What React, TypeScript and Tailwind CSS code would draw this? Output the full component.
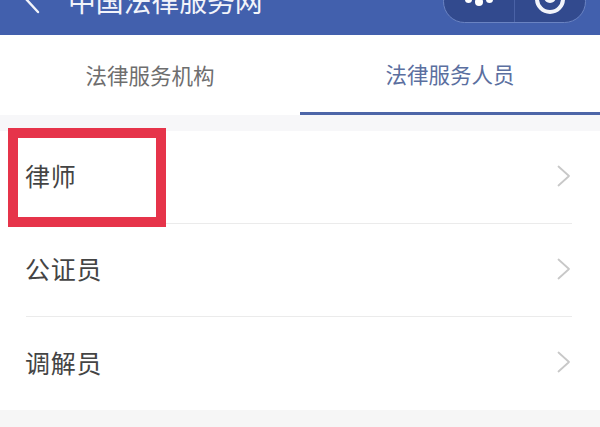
const FONT = "font-['Noto_Sans_CJK_SC','Noto_Sans',sans-serif]";

const people = ["律师", "公证员", "调解员"];

function Row({ label, last }: { label: string; last?: boolean }) {
  return (
    <div className="pl-[26px] pr-7">
      <div className={`flex h-[93px] items-center justify-between pb-[3px] ${last ? "" : "border-b border-[#ebebeb]"}`}>
        <span className="-ml-px text-[25px] leading-none text-[#444444] tracking-[0.8px]">{label}</span>
        <svg width="16" height="24" viewBox="0 0 16 24" fill="none">
          <path d="M2.5 2.5 L13 12 L2.5 21.5" stroke="#c8c8c8" strokeWidth="1.8" strokeLinecap="round" strokeLinejoin="round" />
        </svg>
      </div>
    </div>
  );
}

export default function App() {
  return (
    <div className={`relative h-[427px] w-[600px] overflow-hidden bg-white ${FONT}`}>
      {/* 顶部标题栏 */}
      <div className="relative h-[35px] overflow-hidden bg-[#4260ad]">
        <div className="-mt-[17px] flex items-center pl-5 text-white">
          <svg width="26" height="34" viewBox="0 0 26 34" fill="none">
            <path d="M18 3 L6 16 L18 29" stroke="#f2f4fa" strokeWidth="2.4" strokeLinecap="round" />
          </svg>
          <span className="ml-[22px] text-[27.8px] leading-[34px] text-[#f2f4fa]">中国法律服务网</span>
        </div>
        <div className="absolute right-[14px] -top-[20px] flex h-[43px] w-[143px] items-center rounded-[22px] border border-[#6a83c2] bg-[#324a8e]">
          <div className="flex h-full flex-1 justify-center gap-[3px] border-r border-[#4a62a6]">
            <span className="mt-[15px] h-[7px] w-[7px] rounded-full bg-white" />
            <span className="mt-[17px] h-[8px] w-[8px] rounded-full bg-white" />
            <span className="mt-[15px] h-[7px] w-[7px] rounded-full bg-white" />
          </div>
          <div className="flex h-full flex-1 justify-center">
            <span className="-mt-[2px] flex h-[35px] w-[30px] items-center justify-center rounded-full border-[4px] border-[#f2f4fa]">
              <span className="h-[12px] w-[12px] rounded-full bg-[#f2f4fa]" />
            </span>
          </div>
        </div>
      </div>

      {/* 标签页 */}
      <div className="flex h-[80px] bg-white">
        <div className="flex flex-1 items-center justify-center text-[21.5px] leading-none text-[#6e6e6e]">
          法律服务机构
        </div>
        <div className="flex flex-1 items-center justify-center border-b-[3px] border-[#4d66a8] text-[21.5px] leading-none text-[#5b6f9f]">
          法律服务人员
        </div>
      </div>

      <div className="h-[16px] bg-[#f7f7f9]" />

      {/* 列表 */}
      <div className="bg-white">
        {people.map((p, i) => (
          <Row key={p} label={p} last={i === people.length - 1} />
        ))}
      </div>
      <div className="h-[30px] bg-[#f6f6f6]" />

      {/* 红框标注 */}
      <div className="absolute left-[8px] top-[128px] h-[99px] w-[158px] border-[10px] border-[#e6344a]" />
    </div>
  );
}
